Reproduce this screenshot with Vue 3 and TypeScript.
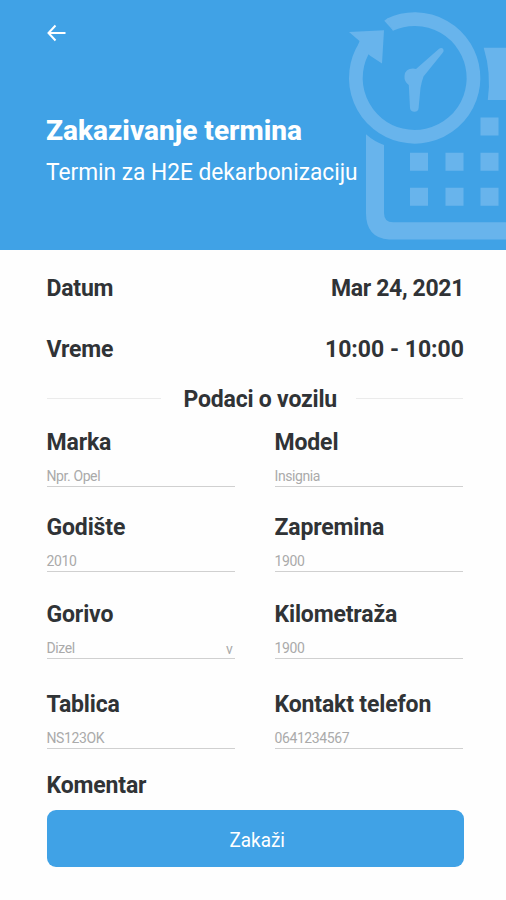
<script setup lang="ts">
interface Field {
  id: string
  label: string
  placeholder: string
  select?: boolean
}

const rows: Field[][] = [
  [
    { id: 'marka', label: 'Marka', placeholder: 'Npr. Opel' },
    { id: 'model', label: 'Model', placeholder: 'Insignia' },
  ],
  [
    { id: 'godiste', label: 'Godište', placeholder: '2010' },
    { id: 'zapremina', label: 'Zapremina', placeholder: '1900' },
  ],
  [
    { id: 'gorivo', label: 'Gorivo', placeholder: 'Dizel', select: true },
    { id: 'kilometraza', label: 'Kilometraža', placeholder: '1900' },
  ],
  [
    { id: 'tablica', label: 'Tablica', placeholder: 'NS123OK' },
    { id: 'telefon', label: 'Kontakt telefon', placeholder: '0641234567' },
  ],
]
</script>

<template>
  <main class="screen">
    <header class="hero">
      <svg class="art" viewBox="336 0 170 250" aria-hidden="true">
        <path class="ring" d="M390 24.600A58.800 58.800 0 1 1 365 46.500" />
        <path d="M384.300 20.700L387.500 18.200L393.500 30.900Z" />
        <path d="M349 32L384 30.300L382 63.500L370.500 56L358 46L359.500 41Z" />
        <path d="M404.500 76Q405 68.500 413 68.500L416 69L438.500 49.200Q441.500 46.800 443.200 49Q444.500 50.800 442.500 53L423.500 76.500Q421.500 82 420.500 88L418.600 108Q418.300 111.800 414.500 111.800Q410.500 111.800 410 108L408.800 85Q404 81.500 404.500 76Z" />
        <path d="M366 134.300Q374 141.500 384 145V213Q384 222.300 393 222.300H506V239.500H389Q366 238 366 213Z" />
        <path d="M483.700 47.700H506V100H487.800Q491.500 73 483.700 47.700Z" />
        <path d="M480.500 117.500h18v18h-18zM410 152.700h18v18h-18zM445.500 152.700h18v18h-18zM480.500 152.700h18v18h-18zM410 187.800h18v18h-18zM445.500 187.800h18v18h-18zM480.500 187.800h18v18h-18z" />
      </svg>
      <button class="back" type="button" aria-label="Nazad">
        <svg viewBox="0 0 20 18"><path d="M9.500 1.500L2.500 9L9.500 16.500M2.700 9H19.500" /></svg>
      </button>
      <h1 class="title">Zakazivanje termina</h1>
      <p class="subtitle">Termin za H2E dekarbonizaciju</p>
    </header>

    <section class="content">
      <div class="summary"><span>Datum</span><span class="date">Mar 24, 2021</span></div>
      <div class="summary time"><span>Vreme</span><span class="hours">10:00 - 10:00</span></div>

      <div class="divider"><span>Podaci o vozilu</span></div>

      <div class="form">
        <div v-for="(row, i) in rows" :key="i" class="row">
          <div v-for="field in row" :key="field.id" class="field">
            <span class="label">{{ field.label }}</span>
            <div class="input">
              <span>{{ field.placeholder }}</span>
              <span v-if="field.select" class="caret">v</span>
            </div>
          </div>
        </div>
      </div>

      <div class="label comment">Komentar</div>
      <button class="submit" type="button"><span>Zakaži</span></button>
    </section>
  </main>
</template>

<style>
body {
  background: #fefefe;
}
</style>

<style scoped>
.screen {
  width: 506px;
  height: 900px;
  overflow: hidden;
  box-sizing: border-box;
  background: #fefefe;
  color: #303336;
  font-family: Roboto, "Liberation Sans", sans-serif;
}
button {
  border: 0;
  padding: 0;
  font-family: inherit;
}
.hero {
  position: relative;
  height: 250px;
  box-sizing: border-box;
  padding: 24px 46px 0;
  background: #40a2e6;
  color: #fff;
}
.art {
  position: absolute;
  top: 0;
  right: 0;
  width: 170px;
  height: 250px;
  fill: #68b4ec;
}
.ring {
  fill: none;
  stroke: #68b4ec;
  stroke-width: 13.700px;
}
.back {
  display: block;
  width: 20px;
  height: 18px;
  background: none;
}
.back svg {
  display: block;
  width: 20px;
  height: 18px;
  fill: none;
  stroke: #fff;
  stroke-width: 2;
}
.title {
  margin: 74px 0 0;
  font-size: 28px;
  font-weight: 800;
  line-height: 30px;
  white-space: nowrap;
}
.subtitle {
  width: max-content;
  margin: 11px 0 0;
  font-size: 24px;
  line-height: 30px;
  white-space: nowrap;
  transform: scaleX(0.946);
  transform-origin: left;
}
.content {
  padding: 24px 43px 0 46.500px;
}
.summary {
  display: flex;
  justify-content: space-between;
  font-size: 23px;
  font-weight: 700;
  line-height: 30px;
  letter-spacing: -0.200px;
}
.date {
  margin-right: -1px;
  letter-spacing: -0.350px;
}
.hours {
  margin-right: -1px;
  letter-spacing: 0;
}
.time {
  margin-top: 31px;
}
.divider {
  display: flex;
  align-items: center;
  justify-content: space-between;
  margin-top: 19px;
  font-size: 23px;
  font-weight: 700;
  line-height: 30px;
  letter-spacing: -0.200px;
}
.divider span {
  position: relative;
  top: 0.500px;
  margin-left: 4px;
}
.divider::before,
.divider::after {
  content: "";
  height: 1px;
  margin-bottom: 1px;
  background: #ebebeb;
}
.divider::before {
  width: 114px;
}
.divider::after {
  width: 107px;
}
.form {
  display: grid;
  grid-template-rows: 85px 87px 90px 81px;
  margin-top: 13px;
}
.row {
  display: grid;
  grid-template-columns: 188px 188px;
  column-gap: 40px;
}
.label {
  display: block;
  padding-top: 1px;
  font-size: 23px;
  font-weight: 700;
  line-height: 30px;
  letter-spacing: -0.150px;
  white-space: nowrap;
}
.input {
  display: flex;
  justify-content: space-between;
  height: 29px;
  box-sizing: border-box;
  padding-top: 8px;
  border-bottom: 1px solid #d0d0d0;
  color: #aaa;
  font-size: 14px;
  line-height: 20px;
  letter-spacing: -0.400px;
}
.caret {
  padding: 1px 2px 0 0;
}
.submit {
  display: block;
  width: 417px;
  height: 57px;
  margin-top: 9px;
  border-radius: 9px;
  background: #40a2e6;
  color: #fff;
  font-size: 20px;
}
.submit span {
  display: inline-block;
  padding: 2px 0 0 5px;
  transform: scaleX(0.945);
}
</style>
